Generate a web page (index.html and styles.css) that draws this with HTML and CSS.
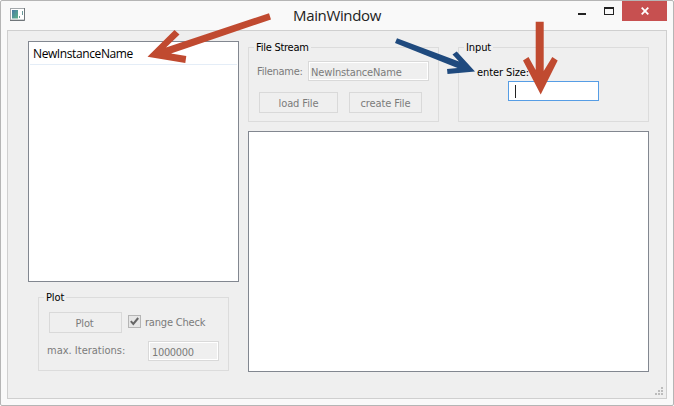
FILE: index.html
```html
<!DOCTYPE html>
<html lang="en">
<head>
<meta charset="utf-8">
<title>MainWindow</title>
<link rel="stylesheet" href="styles.css">
</head>
<body>
<div class="window">
  <header class="titlebar">
    <svg class="app-icon" width="16" height="14" viewBox="0 0 16 14">
      <defs><linearGradient id="pane" x1="0" y1="0" x2="1" y2="1"><stop offset="0" stop-color="#477aa4"/><stop offset="1" stop-color="#5eb489"/></linearGradient></defs>
      <rect x=".5" y=".5" width="14" height="11.5" fill="#fff" stroke="#a3a8ab"/>
      <path d="M14.500 0v12.500H0" fill="none" stroke="#70767a"/>
      <rect x="2" y="2" width="6" height="8.500" fill="url(#pane)"/>
      <path d="M9.500 8v2M12.500 3v4" stroke="#6b9b9b"/>
    </svg>
    <h1 class="title">MainWindow</h1>
    <div class="controls">
      <span class="minimize"></span>
      <span class="maximize"></span>
      <span class="close"><svg width="8" height="8" viewBox="0 0 8 8"><path d="M.7.7l6.6 6.6M7.3.7L.7 7.3" stroke="#fff" stroke-width="1.8"/></svg></span>
    </div>
  </header>
  <main class="client">
    <section class="sidebar">
      <div class="list"><div class="list-item"><span class="t-item">NewInstanceName</span></div></div>
      <div class="group plot">
        <h2 class="legend t-plot">Plot</h2>
        <div class="plot-row">
          <div class="button plot-button"><span class="t-plot">Plot</span></div>
          <span class="checkbox"><svg width="11" height="11" viewBox="0 0 11 11"><path d="M1.8 5.2L4.3 8 9.2 2" fill="none" stroke="#666" stroke-width="2"/></svg></span>
          <span class="t-range">range Check</span>
        </div>
        <div class="iterations-row">
          <span class="t-max">max. Iterations:</span>
          <div class="field iterations"><span class="t-num">1000000</span></div>
        </div>
      </div>
    </section>
    <section class="content">
      <div class="groups">
        <div class="group stream">
          <h2 class="legend t-stream">File Stream</h2>
          <div class="filename-row">
            <span class="t-filename">Filename:</span>
            <div class="field filename"><span class="t-name">NewInstanceName</span></div>
          </div>
          <div class="button-row">
            <div class="button load"><span class="t-load">load File</span></div>
            <div class="button create"><span class="t-create">create File</span></div>
          </div>
        </div>
        <div class="group input">
          <h2 class="legend t-input">Input</h2>
          <div class="size-label"><span class="t-size">enter Size:</span></div>
          <div class="size-field"><span class="caret"></span></div>
        </div>
      </div>
      <div class="canvas"></div>
    </section>
    <svg class="grip" width="9" height="9" viewBox="0 0 9 9"><path d="M6 0h2v2H6zM3 3h2v2H3zM6 3h2v2H6zM0 6h2v2H0zM3 6h2v2H3zM6 6h2v2H6z" fill="#bcbcbc"/></svg>
  </main>
</div>
<svg class="arrows" width="674" height="406" viewBox="0 0 674 406">
  <g fill="#c04a30">
    <path d="M269 13.200L271 19.500L171 53.500L186.300 56L185.300 63L147.500 56.700L174.500 30L179.500 34.500L166 47.500Z"/>
    <path d="M535.700 21.700H543.700V71L552.300 57L557.700 60.500L540.700 94.500L523 60.500L528.500 57L535.700 70Z"/>
  </g>
  <path fill="#1f4a7e" d="M397 38.300L459 61.500L452.500 54.500L456.700 51.500L475 71.500L447.500 74L447 69L457.500 68L395 43Z"/>
</svg>
</body>
</html>
```

FILE: styles.css
```css
* { box-sizing: border-box; }
body {
  margin: 0;
  background: #fff;
  font: 11px/14px "DejaVu Sans Condensed", "DejaVu Sans", sans-serif;
  font-stretch: condensed;
  letter-spacing: -0.1px;
  color: #7b7b7b;
}
span { white-space: nowrap; }
.window {
  width: 674px;
  height: 406px;
  padding: 0 6px 6px;
  border: 1px solid #b5b5b5;
  border-radius: 2px;
  background: #f9f9f9;
}
.titlebar {
  display: grid;
  grid-template-columns: 286px 1fr auto;
  align-items: start;
  height: 29px;
}
.app-icon { margin: 7px 0 0 3px; }
.title {
  margin: 4px 0 0;
  font: 15px/20px "Open Sans", sans-serif;
  color: #222;
  letter-spacing: -0.35px;
}
.controls { display: flex; }
.minimize { width: 8px; height: 2px; margin: 12px 18px 0 0; background: #222; }
.maximize { width: 10px; height: 8px; margin: 6px 8px 0 0; border: 1px solid #222; border-top-width: 2px; }
.close {
  display: flex;
  align-items: center;
  justify-content: center;
  width: 45px;
  height: 20px;
  background: #c75050;
}
.client {
  position: relative;
  display: flex;
  gap: 9px;
  width: 660px;
  height: 369px;
  padding: 10px 17px 0 20px;
  border: 1px solid #cfcfcf;
  background: #efefef;
}
.sidebar { width: 211px; }
.list { height: 241px; padding: 1px; border: 1px solid #828790; background: #fff; }
.list-item {
  height: 22px;
  padding: 2px 3px;
  border-bottom: 1px solid #e4edf7;
  font: 12px/18px "Open Sans", sans-serif;
  letter-spacing: -0.4px;
  color: #000;
}
.group { border: 1px solid #dcdcdc; }
.legend {
  width: max-content;
  height: 14px;
  margin: -7px 0 0 5px;
  padding: 0 2px;
  background: #efefef;
  color: #000;
  font-size: 11px;
  font-weight: 400;
  line-height: 14px;
}
.t-stream { letter-spacing: -0.25px; }
.button {
  display: flex;
  align-items: center;
  justify-content: center;
  height: 21px;
  padding-top: 2px;
  border: 1px solid #d9d9d9;
}
.field { height: 20px; padding: 4px 2px 0; border: 1px solid #d9d9d9; box-shadow: inset 0 0 0 1px #fff; }
.plot { width: 191px; height: 74px; margin: 15px 0 0 10px; }
.plot-row { display: flex; margin: 7px 0 0 10px; }
.plot-button { width: 73px; padding-right: 2px; }
.checkbox { width: 13px; height: 13px; margin: 3px 4px 0 6px; border: 1px solid #b5b5b5; background: #e6e6e6; }
.checkbox svg { display: block; }
.t-range { margin-top: 4px; letter-spacing: -0.2px; }
.iterations-row { display: flex; margin: 8px 9px 0 8px; justify-content: space-between; }
.iterations { width: 71px; padding-left: 3px; }
.t-num { letter-spacing: -0.35px; }
.t-max { margin-top: 3px; letter-spacing: 0; }
.content { width: 401px; }
.groups { display: flex; justify-content: space-between; padding-top: 6px; }
.stream, .input { width: 191px; height: 75px; }
.filename-row { display: flex; justify-content: space-between; margin: 6px 9px 0 8px; }
.filename { width: 121px; }
.t-filename { margin-top: 4px; letter-spacing: -0.25px; }
.t-name { letter-spacing: -0.15px; }
.button-row { display: flex; gap: 11px; margin: 11px 0 0 10px; }
.load { width: 79px; }
.create { width: 73px; }
.size-label { height: 14px; margin: 11px 0 0 18px; color: #000; }
.size-field { width: 91px; height: 20px; margin: 1px 0 0 49px; padding: 3px 6px; border: 1px solid #569de5; background: #fff; }
.caret { display: block; width: 1px; height: 13px; background: #222; }
.canvas { height: 241px; margin-top: 9px; border: 1px solid #828790; background: #fff; }
.grip { position: absolute; right: 2px; bottom: 2px; }
.arrows { position: absolute; left: 0; top: 0; }
```
